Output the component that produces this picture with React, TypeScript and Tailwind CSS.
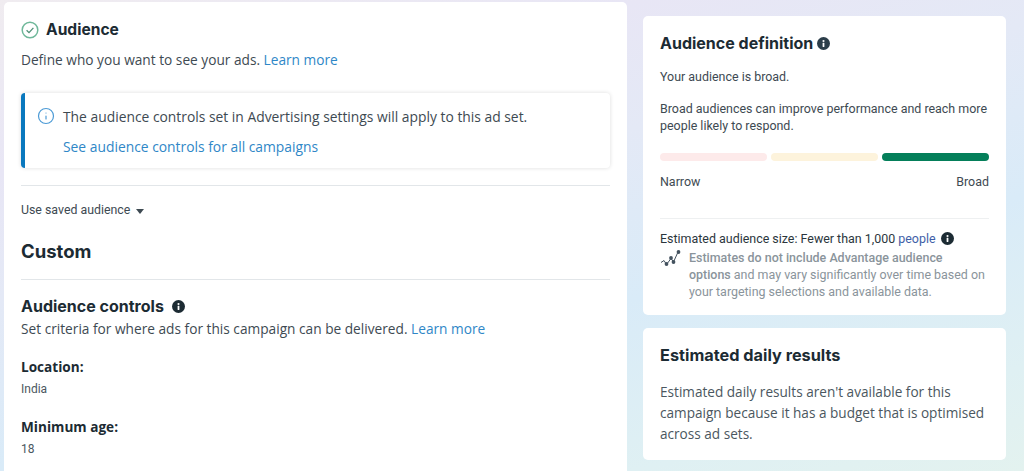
import { Info } from 'lucide-react'

const body = "font-['Open_Sans','Noto_Sans',sans-serif]"
const heading = "font-['Inter',sans-serif]"

function InfoDot({ className }: { className: string }) {
  return (
    <svg viewBox="0 0 16 16" className={className}>
      <circle cx="8" cy="8" r="8" fill="currentColor" />
      <rect x="6.9" y="7" width="2.2" height="5.2" rx="0.4" fill="#fff" />
      <circle cx="8" cy="4.9" r="1.3" fill="#fff" />
    </svg>
  )
}

function CheckCircle() {
  return (
    <svg viewBox="0 0 18 18" className="h-[18px] w-[18px] shrink-0" fill="none">
      <circle cx="9" cy="9" r="7.8" stroke="#6fb89a" strokeWidth="1.5" />
      <path d="M5.6 9.3l2.4 2.3 4.4-4.7" stroke="#4f8f76" strokeWidth="1.3" />
    </svg>
  )
}

function TrendIcon() {
  return (
    <svg viewBox="0 0 22 20" className="h-[20px] w-[22px] shrink-0" fill="none">
      <path d="M1 13.5l3-2 2.5 4 4.5-6 2.5 3.5L18 3" stroke="#44525f" strokeWidth="1" />
      <circle cx="6.5" cy="15" r="1.9" fill="#44525f" />
      <circle cx="11" cy="9" r="1.9" fill="#44525f" />
      <circle cx="13.5" cy="13" r="1.9" fill="#44525f" />
      <circle cx="18.5" cy="3" r="1.9" fill="#44525f" />
    </svg>
  )
}

export default function App() {
  return (
    <div className="flex h-[471px] w-[1024px] items-start gap-[16px] overflow-hidden bg-[linear-gradient(165deg,#f0ecf0_0%,#e8e6f5_23%,#e4e9f6_40%,#d9ebf8_63%,#dff0f3_86%,#e3f2ef_100%)] pl-[4px] pt-[2px]">
      <div className={`h-[480px] w-[623px] shrink-0 rounded-t-[5px] bg-white px-[17px] pt-[18px] ${body}`}>
        <div className="flex h-[20px] items-center gap-[7px]">
          <CheckCircle />
          <h2 className={`text-[15.6px] font-bold text-[#1c2b33] ${heading}`}>Audience</h2>
        </div>
        <p className="mt-[10px] text-[13.7px] leading-[20px] text-[#3e4a52]">
          Define who you want to see your ads. <span className="text-[#2f87c7]">Learn more</span>
        </p>

        <div className="mt-[23px] flex h-[75px] rounded-[4px] border-l-[4px] border-[#0a78be] bg-white pl-[12px] pt-[14px] shadow-[0_0_4px_rgba(0,0,0,0.14)]">
          <Info className="h-[18px] w-[18px] shrink-0 text-[#4d9bd6]" strokeWidth={1.6} />
          <div className="ml-[8px] text-[13.85px] leading-[20px]">
            <p className="text-[#3e4a52]">The audience controls set in Advertising settings will apply to this ad set.</p>
            <p className="mt-[10px] text-[#2f87c7]">See audience controls for all campaigns</p>
          </div>
        </div>

        <div className="mt-[17px] h-px bg-[#e2e6e9]" />

        <div className="mt-[15px] flex h-[18px] items-center gap-[6px] font-['Roboto',sans-serif] text-[12.35px] text-[#3e4a52]">
          Use saved audience
          <span className="mt-[2px] h-0 w-0 border-x-[4.5px] border-t-[5px] border-x-transparent border-t-[#3e4a52]" />
        </div>

        <h2 className={`mt-[21px] text-[18.5px] leading-[22px] font-bold text-[#1c2b33] ${heading}`}>Custom</h2>

        <div className="mt-[17px] h-px bg-[#e2e6e9]" />

        <div className="mt-[17px] flex h-[18px] items-center gap-[8px]">
          <h3 className={`text-[16px] font-bold text-[#1c2b33] ${heading}`}>Audience controls</h3>
          <InfoDot className="h-[13px] w-[13px] text-[#1c2b33]" />
        </div>
        <p className="mt-[4px] text-[13.7px] leading-[20px] text-[#3e4a52]">
          Set criteria for where ads for this campaign can be delivered. <span className="text-[#2f87c7]">Learn more</span>
        </p>

        <h4 className="mt-[18px] text-[13.6px] leading-[20px] font-bold text-[#1c2b33]">Location:</h4>
        <p className="mt-[3px] font-['Roboto',sans-serif] text-[12px] leading-[18px] text-[#4b5760]">India</p>
        <h4 className="mt-[19px] text-[13.6px] leading-[20px] font-bold text-[#1c2b33]">Minimum age:</h4>
        <p className="mt-[3px] font-['Roboto',sans-serif] text-[12px] leading-[18px] text-[#4b5760]">18</p>
      </div>

      <div className="mt-[14px] flex w-[363px] shrink-0 flex-col gap-[13px]">
        <div className="h-[299px] rounded-[5px] bg-white px-[17px] pt-[17px] font-['Roboto',sans-serif] text-[12.45px] leading-[17px] text-[#3e4a52]">
          <div className="flex h-[20px] items-center gap-[4px]">
            <h2 className={`text-[16px] font-bold text-[#1c2b33] ${heading}`}>Audience definition</h2>
            <InfoDot className="h-[13px] w-[13px] text-[#2c3e4a]" />
          </div>
          <p className="mt-[15px]">Your audience is broad.</p>
          <p className="mt-[15px]">
            Broad audiences can improve performance and reach more
            <br />
            people likely to respond.
          </p>
          <div className="mt-[19px] flex gap-[4px]">
            <div className="h-[8px] flex-1 rounded-full bg-[#fdeaea]" />
            <div className="h-[8px] flex-1 rounded-full bg-[#fdf3dc]" />
            <div className="h-[8px] flex-1 rounded-full bg-[#047f5a]" />
          </div>
          <div className="mt-[12px] flex justify-between">
            <span>Narrow</span>
            <span>Broad</span>
          </div>
          <div className="mt-[28px] h-px bg-[#eef0f1]" />
          <div className="mt-[11px] flex h-[17px] items-center gap-[5px]">
            <span className="text-[#2b363d]">
              Estimated audience size: Fewer than 1,000 <span className="text-[#3f5fa8]">people</span>
            </span>
            <InfoDot className="h-[13px] w-[13px] text-[#1c2b33]" />
          </div>
          <div className="mt-[2px] flex gap-[7px]">
            <TrendIcon />
            <p className="text-[#8a949b]">
              <span className="font-medium">
                Estimates do not include Advantage audience
                <br />
                options
              </span>{' '}
              and may vary significantly over time based on
              <br />
              your targeting selections and available data.
            </p>
          </div>
        </div>

        <div className={`h-[132px] rounded-[5px] bg-white px-[17px] pt-[17px] text-[#4b5760] ${body}`}>
          <h2 className={`text-[16.3px] leading-[20px] font-bold text-[#1c2b33] ${heading}`}>Estimated daily results</h2>
          <p className="mt-[16px] text-[13.6px] leading-[21px]">
            Estimated daily results aren't available for this campaign because it has a budget that is optimised across ad sets.
          </p>
        </div>
      </div>
    </div>
  )
}
